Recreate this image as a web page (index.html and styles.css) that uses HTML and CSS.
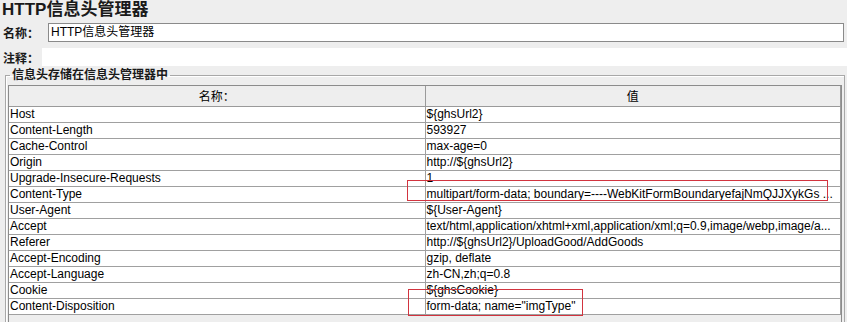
FILE: index.html
```html
<!DOCTYPE html>
<html lang="zh-CN">
<head>
  <meta charset="UTF-8">
  <title>HTTP信息头管理器</title>
  <link rel="stylesheet" href="styles.css">
</head>
<body>
  <div class="title">HTTP信息头管理器</div>

  <div class="row name-row">
    <label class="row-label">名称：</label>
    <div class="field">HTTP信息头管理器</div>
  </div>

  <div class="row note-row">
    <label class="row-label">注释：</label>
    <div class="field plain"></div>
  </div>

  <fieldset class="group">
    <legend>信息头存储在信息头管理器中</legend>
    <div class="scroll">
      <table class="headers">
        <thead>
          <tr><th>名称：</th><th>值</th></tr>
        </thead>
        <tbody>
          <tr><td>Host</td><td>${ghsUrl2}</td></tr>
          <tr><td>Content-Length</td><td>593927</td></tr>
          <tr><td>Cache-Control</td><td>max-age=0</td></tr>
          <tr><td>Origin</td><td>http://${ghsUrl2}</td></tr>
          <tr><td>Upgrade-Insecure-Requests</td><td>1</td></tr>
          <tr><td>Content-Type</td><td>multipart/form-data; boundary=----WebKitFormBoundaryefajNmQJJXykGs ...</td></tr>
          <tr><td>User-Agent</td><td>${User-Agent}</td></tr>
          <tr><td>Accept</td><td>text/html,application/xhtml+xml,application/xml;q=0.9,image/webp,image/a...</td></tr>
          <tr><td>Referer</td><td>http://${ghsUrl2}/UploadGood/AddGoods</td></tr>
          <tr><td>Accept-Encoding</td><td>gzip, deflate</td></tr>
          <tr><td>Accept-Language</td><td>zh-CN,zh;q=0.8</td></tr>
          <tr><td>Cookie</td><td>${ghsCookie}</td></tr>
          <tr><td>Content-Disposition</td><td>form-data; name="imgType"</td></tr>
        </tbody>
      </table>
    </div>
  </fieldset>

  <!-- 红框标注 -->
  <div class="mark mark-type"></div>
  <div class="mark mark-disp"></div>
</body>
</html>
```

FILE: styles.css
```css
*{
  margin: 0;
  padding: 0;
  box-sizing: border-box;
}
html{
  background-color: #eeeeee;
}
body{
  position: relative;
  width: 847px;
  height: 322px;
  overflow: hidden;
  font-family: "Liberation Sans", "Noto Sans CJK SC", sans-serif;
  font-size: 12px;
  color: #000;
}
.title{
  height: 20px;
  line-height: 20px;
  padding-left: 2px;
  font-size: 17px;
  font-weight: bold;
  color: #1a1a1a;
}
.row{
  display: flex;
  align-items: center;
}
.name-row{
  margin-top: 3px;
  height: 19px;
}
.note-row{
  margin-top: 6px;
  height: 18px;
}
.row-label{
  padding-left: 3px;
  font-weight: bold;
  color: #1a1a1a;
}
.name-row .row-label{
  width: 48px;
}
.note-row .row-label{
  width: 42px;
}
.field{
  height: 19px;
  line-height: 17px;
  margin-right: 3px;
  padding-left: 2px;
  flex: 1;
  background-color: #fff;
  border: 1px solid #8a8a8a;
}
.field.plain{
  height: 18px;
  margin-right: 0;
  border: none;
}
.group{
  margin: 2px 3px 0 5px;
  padding: 3px 2px 0 2px;
  border: 1px solid #a8a8a8;
  border-bottom: none;
  box-shadow: inset 1px 1px 0 #fff;
}
.group legend{
  margin-left: 2px;
  padding: 0 2px;
  line-height: 14px;
  font-weight: bold;
  color: #1a1a1a;
}
.scroll{
  height: 237px;
  overflow: hidden;
  border: 1px solid #8c8c8c;
  border-bottom: none;
  background-color: #eeeeee;
}
.headers{
  width: 832px;
  table-layout: fixed;
  border-collapse: collapse;
  background-color: #fff;
}
.headers th{
  height: 20px;
  font-weight: normal;
  text-align: center;
  background-color: #eeeeee;
  border-right: 1px solid #9a9a9a;
  border-bottom: 1px solid #9a9a9a;
}
.headers th:first-child{
  width: 416px;
}
.headers td{
  height: 16px;
  line-height: 15px;
  padding: 0 0 0 1px;
  white-space: nowrap;
  overflow: hidden;
  border-right: 1px solid #a0a0a0;
  border-bottom: 1px solid #a0a0a0;
}
.mark{
  position: absolute;
  border: 1px solid #d2343f;
}
.mark-type{
  left: 407px;
  top: 180px;
  width: 421px;
  height: 21px;
}
.mark-disp{
  left: 408px;
  top: 289px;
  width: 175px;
  height: 27px;
}
```
